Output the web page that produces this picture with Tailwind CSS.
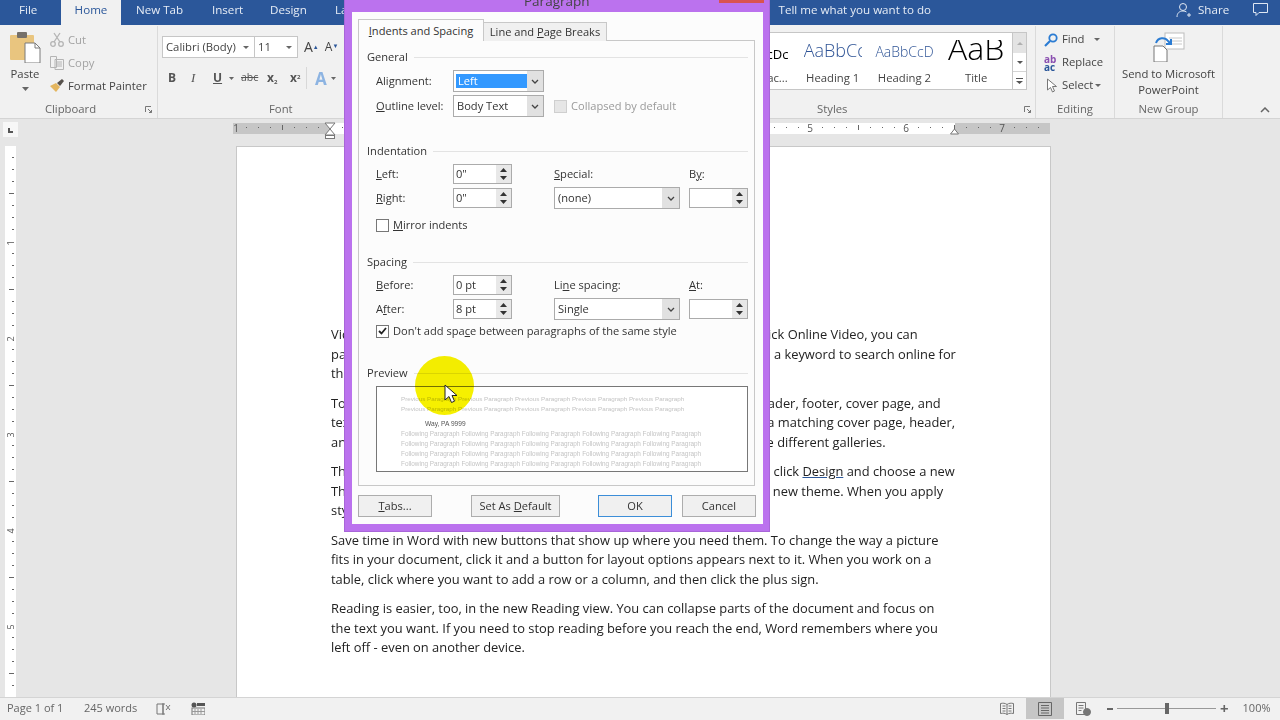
<!DOCTYPE html>
<html lang="en">
<head>
<meta charset="UTF-8">
<script src="https://cdn.jsdelivr.net/npm/@tailwindcss/browser@4"></script>
<title>Word - Paragraph dialog</title>
</head>
<body class="overflow-hidden">
<div class="relative flex h-[720px] w-[1280px] flex-col overflow-hidden bg-[#e6e6e6] font-['Open_Sans',sans-serif] text-[11.3px] text-[#444]">

  <!-- title / tab bar -->
  <div class="relative flex h-[25px] shrink-0 items-start bg-[#2b579a] text-[11.6px] leading-[19px] text-[#e6ecf5]">
    <span class="ml-[19px] w-[42px]">File</span>
    <span class="flex h-[25px] w-[60px] justify-center bg-[#f1f1f1] text-[#2b579a]">Home</span>
    <span class="ml-[15px] w-[76px]">New Tab</span>
    <span class="w-[58px]">Insert</span>
    <span class="w-[65px]">Design</span>
    <span>Layout</span>
    <span class="ml-[407px] w-[400px]">Tell me what you want to do</span>
    <div class="absolute left-[1176px] top-0 flex h-[19px] items-center">
      <svg width="16" height="16" viewBox="0 0 16 16" fill="none" stroke="#dfe7f3" stroke-width="1"><circle cx="7" cy="5" r="3.5"/><path d="M1 15c0-4 2.500-6 6-6 1.500 0 2.500.4 3.500 1M11 13h4M13 11v4"/></svg>
      <span class="ml-[6px]">Share</span>
      <svg class="ml-[23px]" width="17" height="15" viewBox="0 0 17 15" fill="none" stroke="#dfe7f3"><path d="M1.500 1.500h14v9H7l-3 3v-3H1.500z"/></svg>
    </div>
  </div>

  <!-- ribbon -->
  <div class="flex h-[94px] shrink-0 border-b border-[#d4d4d4] bg-[#f1f1f1] pt-[1px]">
    <!-- clipboard -->
    <div class="flex w-[158px] shrink-0 flex-col border-r border-[#dadada]">
      <div class="flex h-[75px]">
        <div class="flex w-[50px] flex-col items-center pt-[6px]">
          <svg width="32" height="31" viewBox="0 0 32 31"><rect x="1" y="3" width="24" height="25" rx="1" fill="#e9c57f"/><rect x="8" y="0" width="10" height="6" rx="1" fill="#75706a"/><path d="M16 11h10l5 5v15H16z" fill="#fff" stroke="#7b7b7b"/><path d="M26 11v5h5" fill="none" stroke="#7b7b7b"/></svg>
          <span class="mt-[3px] leading-[16px] text-[#444]">Paste</span>
          <svg class="mt-[5px]" width="7" height="4"><path d="M0 0h7L3.500 4z" fill="#666"/></svg>
        </div>
        <div class="flex flex-col pt-[2px] leading-[23px]">
          <div class="flex h-[23px] items-center text-[#a3a3a3]"><svg width="14" height="15" viewBox="0 0 14 15" fill="none" stroke="#b4b4b4" stroke-width="1.300"><circle cx="3" cy="12" r="2.300"/><circle cx="11" cy="12" r="2.300"/><path d="M4 10 10 1M10 10 4 1"/></svg><span class="ml-[4px]">Cut</span></div>
          <div class="flex h-[23px] items-center text-[#a3a3a3]"><svg width="14" height="14" viewBox="0 0 14 14" fill="none" stroke="#b4b4b4"><path d="M.5.5h6v11h-6zM5 3.500h8.500v10H5zM7 6h5M7 8h5M7 10h5"/></svg><span class="ml-[4px]">Copy</span></div>
          <div class="flex h-[23px] items-center whitespace-nowrap"><svg width="14" height="13" viewBox="0 0 14 13"><path d="M0 7l6-3 4 4-4 5z" fill="#e4b65f"/><path d="M7 4l5-4 2 2-4 5z" fill="#56514c"/></svg><span class="ml-[4px]">Format Painter</span></div>
        </div>
      </div>
      <div class="relative pr-[16px] text-center leading-[16px] text-[#666]">Clipboard
        <svg class="absolute right-[5px] top-[5px]" width="7" height="7" fill="none" stroke="#777"><path d="M.5 6V.5H6M3 3l3.500 3.500M6.500 4v2.500H4"/></svg>
      </div>
    </div>

    <!-- font -->
    <div class="flex w-[600px] shrink-0 flex-col">
      <div class="h-[75px] pl-[4px] pt-[10px]">
        <div class="flex items-center">
          <div class="flex h-[22px] w-[93px] items-center justify-between border border-[#c6c6c6] bg-white pl-[3px] pr-[5px]"><span class="whitespace-nowrap">Calibri (Body)</span><svg width="6" height="3"><path d="M0 0h6L3 3z" fill="#666"/></svg></div>
          <div class="flex h-[22px] w-[43px] items-center justify-between border border-l-0 border-[#c6c6c6] bg-white pl-[3px] pr-[5px]"><span>11</span><svg width="6" height="3"><path d="M0 0h6L3 3z" fill="#666"/></svg></div>
          <span class="ml-[6px] text-[14px] leading-none">A<sup class="text-[6px] text-[#2b579a]">▲</sup></span>
          <span class="ml-[6px] text-[12px] leading-none">A<sup class="text-[6px] text-[#2b579a]">▼</sup></span>
        </div>
        <div class="mt-[9px] flex h-[22px] items-center text-[12px] text-[#555]">
          <b class="ml-[6px] w-[23px]">B</b><i class="w-[22px] font-['Liberation_Serif',serif] text-[13px]">I</i><u class="w-[16px] font-bold">U</u>
          <svg width="5" height="3" class="mr-[7px]"><path d="M0 0h5L2.500 3z" fill="#666"/></svg>
          <span class="w-[26px] text-[10.500px] line-through">abc</span><b class="w-[23px]">x<sub class="text-[6px]">2</sub></b><b class="w-[16px]">x<sup class="text-[6px]">2</sup></b>
          <span class="mr-[8px] h-[22px] w-px bg-[#d8d8d8]"></span>
          <span class="text-[17px] font-bold leading-none text-[#8db4e2]">A</span>
          <svg width="5" height="3" class="ml-[4px]"><path d="M0 0h5L2.500 3z" fill="#666"/></svg>
        </div>
      </div>
      <div class="pl-[111px] leading-[16px] text-[#666]">Font</div>
    </div>

    <!-- styles -->
    <div class="flex w-[278px] shrink-0 flex-col border-r border-[#dadada]">
      <div class="h-[75px] pt-[6px]">
        <div class="flex h-[58px]">
          <div class="flex w-[255px] overflow-hidden border border-l-0 border-[#c6c6c6] bg-white">
            <div class="flex w-[39px] flex-col items-center"><span class="h-[37px] pt-[12px] text-[13px] text-black">cDc</span><span>ac...</span></div>
            <div class="flex w-[72px] flex-col items-center"><span class="block h-[37px] w-[58px] overflow-hidden whitespace-nowrap pt-[4px] text-[18px] font-light text-[#2f5496]">AaBbCc</span><span>Heading 1</span></div>
            <div class="flex w-[72px] flex-col items-center"><span class="block h-[37px] w-[58px] overflow-hidden whitespace-nowrap pt-[8px] text-[14px] font-light text-[#2f5496]">AaBbCcD</span><span>Heading 2</span></div>
            <div class="flex w-[72px] flex-col items-center overflow-hidden"><span class="mt-[7px] block h-[30px] overflow-hidden whitespace-nowrap text-[32px] font-light leading-[30px] text-black"><span class="mt-[-7px] block">AaB</span></span><span>Title</span></div>
          </div>
          <div class="flex w-[14px] flex-col border border-l-0 border-[#c6c6c6] bg-white">
            <span class="flex h-[20px] items-center justify-center bg-[#e3e3e3]"><svg width="6" height="3"><path d="M0 3h6L3 0z" fill="#b0b0b0"/></svg></span>
            <span class="flex h-[19px] items-center justify-center border-b border-[#d4d4d4]"><svg width="6" height="3"><path d="M0 0h6L3 3z" fill="#555"/></svg></span>
            <span class="flex h-[17px] items-center justify-center"><svg width="7" height="6" fill="#555"><path d="M0 0h7v1H0zM0 3h7L3.500 6z"/></svg></span>
          </div>
        </div>
      </div>
      <div class="relative pl-[59px] leading-[16px] text-[#666]">Styles
        <svg class="absolute right-[4px] top-[5px]" width="7" height="7" fill="none" stroke="#777"><path d="M.5 6V.5H6M3 3l3.500 3.500M6.500 4v2.500H4"/></svg>
      </div>
    </div>

    <!-- editing -->
    <div class="flex w-[79px] shrink-0 flex-col border-r border-[#dadada]">
      <div class="flex h-[75px] flex-col pl-[8px] pt-[2px]">
        <div class="flex h-[23px] items-center"><svg width="14" height="14" viewBox="0 0 14 14" fill="none"><circle cx="9" cy="5" r="3.700" stroke="#2b7cd3" stroke-width="1.800"/><path d="M6 8 1 13" stroke="#2b7cd3" stroke-width="2.200"/></svg><span class="ml-[4px]">Find</span><svg class="ml-[9px]" width="6" height="3"><path d="M0 0h6L3 3z" fill="#666"/></svg></div>
        <div class="flex h-[23px] items-center"><span class="w-[17px] text-[10px] font-bold leading-[8px] text-[#2b579a]"><span class="text-[#8a4fb0]">ab</span><br>ac</span><span class="ml-[1px]">Replace</span></div>
        <div class="flex h-[23px] items-center"><svg class="ml-[2px]" width="12" height="15" viewBox="0 0 12 15" fill="#fff" stroke="#777"><path d="M1.500 1v11l3-2.500 2 4.500 2-1-2-4.500h4z"/></svg><span class="ml-[4px]">Select</span><svg class="ml-[2px]" width="6" height="3"><path d="M0 0h6L3 3z" fill="#666"/></svg></div>
      </div>
      <div class="text-center leading-[16px] text-[#666]">Editing</div>
    </div>

    <!-- new group -->
    <div class="flex w-[108px] shrink-0 flex-col border-r border-[#dadada]">
      <div class="flex h-[75px] flex-col items-center">
        <svg class="mt-[6px] shrink-0" width="32" height="30" viewBox="0 0 32 30" fill="none"><rect x="12" y="1" width="19" height="16" fill="#fff" stroke="#bdbdbd"/><path d="M16 6h13M16 9h13M16 12h13" stroke="#c9c9c9"/><path d="M1 14h9l4 4v12H1z" fill="#fff" stroke="#777"/><path d="M3 11C5 5 12 5 15 9l3 3m0-5v5h-5" stroke="#2b7cd3" stroke-width="2"/></svg>
        <span class="mt-[4px] whitespace-nowrap text-center leading-[16px]">Send to Microsoft<br>PowerPoint</span>
      </div>
      <div class="text-center leading-[16px] text-[#666]">New Group</div>
    </div>
    <div class="flex flex-1 items-end justify-end pb-[5px] pr-[10px]"><svg width="10" height="6" fill="none" stroke="#666" stroke-width="1.500"><path d="M1 5l4-4 4 4"/></svg></div>
  </div>

  <!-- horizontal ruler -->
  <div class="flex h-[27px] shrink-0 pt-[3px]">
    <div class="ml-[3px] flex h-[15px] w-[15px] items-end bg-[#f7f7f7] pb-[4px] pl-[5px]"><span class="block h-[5px] w-[5px] border-b-2 border-l-2 border-[#555]"></span></div>
    <svg class="ml-[215px]" width="817" height="17" viewBox="0 0 817 17">
      <defs><pattern id="hticks" x="97" y="0" width="96" height="11" patternUnits="userSpaceOnUse"><rect x="12" y="5" width="1" height="1" fill="#666"/><rect x="24" y="5" width="1" height="1" fill="#666"/><rect x="36" y="5" width="1" height="1" fill="#666"/><rect x="48" y="3" width="1" height="5" fill="#666"/><rect x="60" y="5" width="1" height="1" fill="#666"/><rect x="72" y="5" width="1" height="1" fill="#666"/><rect x="84" y="5" width="1" height="1" fill="#666"/></pattern></defs>
      <rect y="1" width="817" height="11" fill="#c6c6c6"/>
      <rect x="97" y="1" width="625" height="11" fill="#fff"/>
      <rect y="1" width="817" height="11" fill="url(#hticks)"/>
      <g font-size="10" fill="#555" text-anchor="middle"><text x="3" y="10">1</text><text x="577" y="10">5</text><text x="673" y="10">6</text><text x="769" y="10">7</text></g>
      <path d="M92 1h10l-5 6 5 6H92l5-6z" fill="#fff" stroke="#777"/><rect x="92.500" y="13.500" width="9" height="3" fill="#fff" stroke="#777"/>
      <path d="M717.500 12l4-5 4 5z" fill="#fff" stroke="#777"/>
    </svg>
  </div>

  <!-- document area -->
  <div class="flex min-h-0 flex-1 overflow-hidden">
    <svg class="ml-[5px] shrink-0" width="11" height="551" viewBox="0 0 11 551">
      <defs><pattern id="vticks" x="0" y="-1" width="11" height="96" patternUnits="userSpaceOnUse"><rect x="7" y="12" width="2" height="1" fill="#666"/><rect x="7" y="24" width="2" height="1" fill="#666"/><rect x="7" y="36" width="2" height="1" fill="#666"/><rect x="4" y="48" width="5" height="1" fill="#666"/><rect x="7" y="60" width="2" height="1" fill="#666"/><rect x="7" y="72" width="2" height="1" fill="#666"/><rect x="7" y="84" width="2" height="1" fill="#666"/></pattern></defs>
      <rect width="11" height="551" fill="#fff"/>
      <rect width="11" height="551" fill="url(#vticks)"/>
      <g font-size="9" fill="#555" text-anchor="middle"><text transform="translate(9 97) rotate(-90)">1</text><text transform="translate(9 193) rotate(-90)">2</text><text transform="translate(9 289) rotate(-90)">3</text><text transform="translate(9 385) rotate(-90)">4</text><text transform="translate(9 481) rotate(-90)">5</text></g>
    </svg>
    <div class="ml-[220px] h-[560px] w-[815px] shrink-0 border border-[#c8c8c8] bg-white pl-[94px] pt-[178px] text-[12.880px] leading-[19.500px] text-[#222] whitespace-nowrap">
      <p class="mb-[10px]">Video provides a powerful way to help you prove your point. When you click Online Video, you can<br>paste in the embed code for the video you want to add. You can also type a keyword to search online for<br>the video that best fits your document.</p>
      <p class="mb-[10px]">To make your document look professionally produced, Word provides header, footer, cover page, and<br>text box designs that complement each other. For example, you can add a matching cover page, header,<br>and sidebar. Click Insert and then choose the elements you want from the different galleries.</p>
      <p class="mb-[10px]">Themes and styles also help keep your document coordinated. When you click <span class="underline decoration-[#2b579a]">Design</span> and choose a new<br>Theme, the pictures, charts, and SmartArt graphics change to match your new theme. When you apply<br>styles, your headings change to match the new theme.</p>
      <p class="mb-[10px]">Save time in Word with new buttons that show up where you need them. To change the way a picture<br>fits in your document, click it and a button for layout options appears next to it. When you work on a<br>table, click where you want to add a row or a column, and then click the plus sign.</p>
      <p>Reading is easier, too, in the new Reading view. You can collapse parts of the document and focus on<br>the text you want. If you need to stop reading before you reach the end, Word remembers where you<br>left off - even on another device.</p>
    </div>
  </div>

  <!-- status bar -->
  <div class="flex h-[23px] shrink-0 items-center border-t border-[#d4d4d4] bg-[#f1f1f1] pb-[1px] text-[11px] text-[#666]">
    <span class="ml-[7px] w-[77px]">Page 1 of 1</span>
    <span class="w-[72px]">245 words</span>
    <svg width="15" height="14" viewBox="0 0 15 14" fill="none" stroke="#777"><path d="M7 2H1v10h6zM7 2h2M7 12h2M7 1v12M10 3l4 5M14 3l-4 5"/></svg>
    <svg class="ml-[20px]" width="14" height="13" viewBox="0 0 14 13"><circle cx="3" cy="3" r="2.500" fill="#555"/><rect x="6" y="1" width="8" height="3" fill="#555"/><rect x="1" y="6" width="13" height="7" fill="none" stroke="#777"/><path d="M4 7v5M7 7v5M10 7v5M1 9.500h13" stroke="#999"/></svg>
    <svg class="ml-[795px]" width="14" height="14" viewBox="0 0 14 14" fill="none" stroke="#777"><path d="M7 2.500C5 1 3 1 .5 1.500v10c2.500-.5 4.500-.5 6.500 1 2-1.500 4-1.500 6.500-1v-10C11 1 9 1 7 2.500zM7 2.500v10M2.500 4h3M2.500 6.500h3M2.500 9h3M8.500 4h3M8.500 6.500h3M8.500 9h3"/></svg>
    <span class="ml-[12px] flex h-full w-[38px] items-center justify-center bg-[#c6c6c6]"><svg width="14" height="14" viewBox="0 0 14 14" fill="none" stroke="#666"><path d="M.5.5h13v13H.5zM3 3.500h8M3 6h8M3 8.500h8M3 11h8"/></svg></span>
    <svg class="ml-[12px]" width="15" height="14" viewBox="0 0 15 14" fill="none" stroke="#777"><path d="M.5.5h9v12h-9zM2.500 3.500h5M2.500 6h5M2.500 8.500h3"/><circle cx="11" cy="10" r="3.500" fill="#777"/></svg>
    <span class="ml-[16px] h-[2px] w-[6px] bg-[#666]"></span>
    <span class="relative ml-[4px] h-px w-[99px] bg-[#999]"><span class="absolute left-[48px] top-[-5px] h-[11px] w-[4px] bg-[#666]"></span></span>
    <span class="ml-[4px] text-[15px] font-bold leading-none">+</span>
    <span class="ml-[14px]">100%</span>
  </div>

  <!-- paragraph dialog -->
  <div class="absolute left-[344px] top-[-8px] h-[540px] w-[426px] border border-[#a866d8] bg-[#bb72ee] pl-[7px] pt-[19px] text-[#333]">
    <span class="absolute left-[179px] top-[-2px] text-[13.500px] text-[#444]">Paragraph</span>
    <span class="absolute right-[5px] top-0 h-[10px] w-[45px] bg-[#d9534f]"></span>
    <div class="h-[512px] w-[411px] bg-[#fcfcfc] pl-[6px] pt-[7px]">
      <div class="flex h-[22px] items-end">
        <span class="relative z-10 flex h-[22px] w-[126px] items-center justify-center border border-b-0 border-[#c8c8c8] bg-[#fcfcfc] pt-[1px] text-[11.100px]"><span><u>I</u>ndents and Spacing</span></span>
        <span class="flex h-[19px] w-[123px] items-center justify-center border border-l-0 border-b-0 border-[#c8c8c8] bg-[#f0f0f0] text-[11.100px]"><span>Line and <u>P</u>age Breaks</span></span>
      </div>
      <div class="mt-[-1px] h-[446px] w-[397px] border border-[#c8c8c8] pl-[8px] pt-[8px] text-[11.100px]">
        <div class="flex h-[16px] w-[381px] items-center gap-[6px]"><span>General</span><span class="h-px flex-1 bg-[#e3e3e3]"></span></div>
        <div class="mt-[4px] grid grid-cols-[77px_101px_135px_59px] grid-rows-[24px_24px] gap-y-px pl-[9px]">
          <div class="flex items-center">Ali<u>g</u>nment:</div>
          <div class="flex h-[22px] w-[91px] items-center self-center border border-[#ababab] bg-white pl-[2px]"><span class="flex h-[14px] w-[71px] items-center bg-[#3399ff] pl-[2px] text-white">Left</span><span class="ml-auto flex h-full w-[16px] items-center justify-center bg-[#e1e1e1]"><svg width="8" height="5" fill="none" stroke="#444" stroke-width="1.300"><path d="M1 1l3 3 3-3"/></svg></span></div>
          <div></div><div></div>
          <div class="flex items-center"><span><u>O</u>utline level:</span></div>
          <div class="flex h-[22px] w-[91px] items-center self-center border border-[#ababab] bg-white pl-[3px]"><span>Body Text</span><span class="ml-auto flex h-full w-[16px] items-center justify-center bg-[#e1e1e1]"><svg width="8" height="5" fill="none" stroke="#444" stroke-width="1.300"><path d="M1 1l3 3 3-3"/></svg></span></div>
          <div class="col-span-2 flex items-center text-[#9a9a9a]"><span class="mr-[4px] h-[13px] w-[13px] border border-[#cfcfcf] bg-[#e6e6e6]"></span>Collapsed by default</div>
        </div>

        <div class="mt-[25px] flex h-[16px] w-[381px] items-center gap-[6px]"><span>Indentation</span><span class="h-px flex-1 bg-[#e3e3e3]"></span></div>
        <div class="mt-[3px] grid grid-cols-[77px_101px_135px_59px] grid-rows-[24px_24px] pl-[9px]">
          <div class="flex items-center"><span><u>L</u>eft:</span></div>
          <div class="flex h-[20px] w-[59px] items-center self-center border border-[#ababab] bg-white pl-[2px]">0"<span class="ml-auto flex h-full w-[15px] flex-col items-center justify-evenly bg-[#e8e8e8]"><svg width="7" height="4"><path d="M0 4h7L3.500 0z" fill="#333"/></svg><svg width="7" height="4"><path d="M0 0h7L3.500 4z" fill="#333"/></svg></span></div>
          <div class="flex items-center"><span><u>S</u>pecial:</span></div>
          <div class="flex items-center"><span>B<u>y</u>:</span></div>
          <div class="flex items-center"><span><u>R</u>ight:</span></div>
          <div class="flex h-[20px] w-[59px] items-center self-center border border-[#ababab] bg-white pl-[2px]">0"<span class="ml-auto flex h-full w-[15px] flex-col items-center justify-evenly bg-[#e8e8e8]"><svg width="7" height="4"><path d="M0 4h7L3.500 0z" fill="#333"/></svg><svg width="7" height="4"><path d="M0 0h7L3.500 4z" fill="#333"/></svg></span></div>
          <div class="flex h-[22px] w-[126px] items-center self-center border border-[#ababab] bg-white pl-[3px]">(none)<span class="ml-auto flex h-full w-[17px] items-center justify-center bg-[#e1e1e1]"><svg width="8" height="5" fill="none" stroke="#444" stroke-width="1.300"><path d="M1 1l3 3 3-3"/></svg></span></div>
          <div class="flex h-[20px] w-[59px] items-center self-center border border-[#ababab] bg-white"><span class="ml-auto flex h-full w-[15px] flex-col items-center justify-evenly bg-[#e8e8e8]"><svg width="7" height="4"><path d="M0 4h7L3.500 0z" fill="#333"/></svg><svg width="7" height="4"><path d="M0 0h7L3.500 4z" fill="#333"/></svg></span></div>
        </div>
        <div class="mt-[3px] flex h-[24px] items-center pl-[9px]"><span class="mr-[4px] h-[13px] w-[13px] border border-[#777] bg-white"></span><span><u>M</u>irror indents</span></div>

        <div class="mt-[17px] flex h-[16px] w-[381px] items-center gap-[6px]"><span>Spacing</span><span class="h-px flex-1 bg-[#e3e3e3]"></span></div>
        <div class="mt-[3px] grid grid-cols-[77px_101px_135px_59px] grid-rows-[24px_24px] pl-[9px]">
          <div class="flex items-center"><span><u>B</u>efore:</span></div>
          <div class="flex h-[20px] w-[59px] items-center self-center border border-[#ababab] bg-white pl-[2px]">0 pt<span class="ml-auto flex h-full w-[15px] flex-col items-center justify-evenly bg-[#e8e8e8]"><svg width="7" height="4"><path d="M0 4h7L3.500 0z" fill="#333"/></svg><svg width="7" height="4"><path d="M0 0h7L3.500 4z" fill="#333"/></svg></span></div>
          <div class="flex items-center"><span>Li<u>n</u>e spacing:</span></div>
          <div class="flex items-center"><span><u>A</u>t:</span></div>
          <div class="flex items-center"><span>A<u>f</u>ter:</span></div>
          <div class="flex h-[20px] w-[59px] items-center self-center border border-[#ababab] bg-white pl-[2px]">8 pt<span class="ml-auto flex h-full w-[15px] flex-col items-center justify-evenly bg-[#e8e8e8]"><svg width="7" height="4"><path d="M0 4h7L3.500 0z" fill="#333"/></svg><svg width="7" height="4"><path d="M0 0h7L3.500 4z" fill="#333"/></svg></span></div>
          <div class="flex h-[22px] w-[126px] items-center self-center border border-[#ababab] bg-white pl-[3px]">Single<span class="ml-auto flex h-full w-[17px] items-center justify-center bg-[#e1e1e1]"><svg width="8" height="5" fill="none" stroke="#444" stroke-width="1.300"><path d="M1 1l3 3 3-3"/></svg></span></div>
          <div class="flex h-[20px] w-[59px] items-center self-center border border-[#ababab] bg-white"><span class="ml-auto flex h-full w-[15px] flex-col items-center justify-evenly bg-[#e8e8e8]"><svg width="7" height="4"><path d="M0 4h7L3.500 0z" fill="#333"/></svg><svg width="7" height="4"><path d="M0 0h7L3.500 4z" fill="#333"/></svg></span></div>
        </div>
        <div class="flex h-[20px] items-center pl-[9px]"><span class="mr-[4px] flex h-[13px] w-[13px] items-center justify-center border border-[#777] bg-white"><svg width="9" height="8" fill="none" stroke="#222" stroke-width="1.800"><path d="M1 4l2.500 2.500L8 1"/></svg></span><span>Don't add spa<u>c</u>e between paragraphs of the same style</span></div>

        <div class="mt-[24px] flex h-[16px] w-[381px] items-center gap-[6px]"><span>Preview</span><span class="h-px flex-1 bg-[#e3e3e3]"></span></div>
        <div class="ml-[9px] mt-[5px] h-[86px] w-[372px] overflow-hidden border border-[#777] bg-white pl-[24px] pt-[7px] font-['Liberation_Sans',sans-serif] text-[6.250px] leading-[10px] text-[#c4c4c4] whitespace-nowrap">
          <div>Previous Paragraph Previous Paragraph Previous Paragraph Previous Paragraph Previous Paragraph</div>
          <div>Previous Paragraph Previous Paragraph Previous Paragraph Previous Paragraph Previous Paragraph</div>
          <div class="mt-[5px] pl-[24px] text-[6.600px] font-medium text-[#555]">Way, PA 9999</div>
          <div class="text-[6.400px]">Following Paragraph Following Paragraph Following Paragraph Following Paragraph Following Paragraph</div>
          <div class="text-[6.400px]">Following Paragraph Following Paragraph Following Paragraph Following Paragraph Following Paragraph</div>
          <div class="text-[6.400px]">Following Paragraph Following Paragraph Following Paragraph Following Paragraph Following Paragraph</div>
          <div class="text-[6.400px]">Following Paragraph Following Paragraph Following Paragraph Following Paragraph Following Paragraph</div>
          <div class="text-[6.400px]">Following Paragraph Following Paragraph Following Paragraph Following Paragraph Following Paragraph</div>
        </div>
      </div>
      <div class="mt-[9px] flex h-[22px] w-[398px] text-[11.100px]">
        <span class="flex w-[74px] items-center justify-center border border-[#adadad] bg-[#f0f0f0]"><span><u>T</u>abs...</span></span>
        <span class="ml-[39px] flex w-[89px] items-center justify-center border border-[#adadad] bg-[#f0f0f0]"><span>Set As <u>D</u>efault</span></span>
        <span class="ml-[38px] flex w-[74px] items-center justify-center border border-[#3c8ed8] bg-[#f0f0f0]">OK</span>
        <span class="ml-[10px] flex w-[74px] items-center justify-center border border-[#adadad] bg-[#f0f0f0]">Cancel</span>
      </div>
    </div>
  </div>

  <!-- cursor highlight -->
  <div class="absolute left-[415px] top-[356px] h-[59px] w-[59px] rounded-full bg-[#f6f000] mix-blend-multiply"></div>
  <svg class="absolute left-[444px] top-[384px]" width="14" height="21" viewBox="0 0 14 21"><path d="M1 1v15l4-3.500 2.500 6 3-1.300-2.500-5.700h5z" fill="#fff" stroke="#222" stroke-width="1"/></svg>
</div>
</body>
</html>
